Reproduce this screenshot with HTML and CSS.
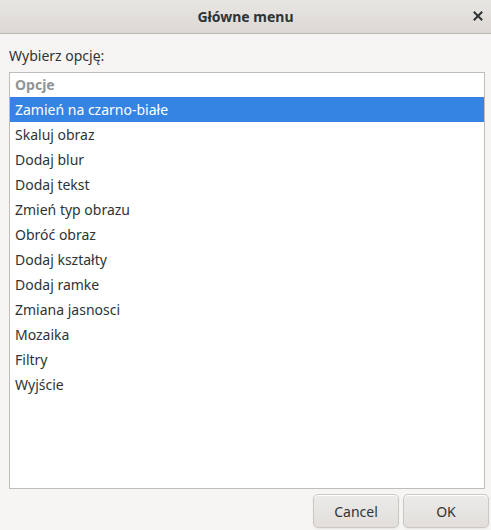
FILE: index.html
```html
<!DOCTYPE html>
<html lang="pl">
<head>
<meta charset="utf-8">
<link rel="stylesheet" href="styles.css">
</head>
<body>
<div class="window">
  <header class="titlebar">
    <span class="title">Główne menu</span>
    <span class="close">
      <svg width="10" height="10" viewBox="0 0 10 10"><path d="M1.5 1.5 L8.5 8.5 M8.5 1.5 L1.5 8.5" stroke="#2e3436" stroke-width="2" stroke-linecap="square"/></svg>
    </span>
  </header>
  <main class="content">
    <div class="label">Wybierz opcję:</div>
    <div class="list">
      <div class="list-header">Opcje</div>
      <div class="row selected">Zamień na czarno-białe</div>
      <div class="row">Skaluj obraz</div>
      <div class="row">Dodaj blur</div>
      <div class="row">Dodaj tekst</div>
      <div class="row">Zmień typ obrazu</div>
      <div class="row">Obróć obraz</div>
      <div class="row">Dodaj kształty</div>
      <div class="row">Dodaj ramke</div>
      <div class="row">Zmiana jasnosci</div>
      <div class="row">Mozaika</div>
      <div class="row">Filtry</div>
      <div class="row">Wyjście</div>
    </div>
    <div class="buttons">
      <button class="btn">Cancel</button>
      <button class="btn">OK</button>
    </div>
  </main>
</div>
</body>
</html>
```
FILE: styles.css
```css
* { box-sizing: border-box; }
html, body { margin: 0; padding: 0; }
body {
  width: 491px;
  height: 530px;
  overflow: hidden;
  background: #f6f5f4;
  font-family: "Noto Sans", "DejaVu Sans", sans-serif;
  font-size: 14px;
  color: #2e3436;
}
.window { display: flex; flex-direction: column; height: 530px; }
.titlebar {
  height: 34px;
  flex: none;
  background: linear-gradient(#e8e6e3, #dcd8d4);
  border-bottom: 1px solid #bfb8b1;
  display: flex;
  align-items: center;
  justify-content: center;
  position: relative;
}
.title { font-weight: bold; font-size: 14px; color: #2e3436; }
.close {
  position: absolute;
  right: 8px;
  top: 11px;
  width: 10px;
  height: 10px;
  display: flex;
}
.content {
  flex: 1;
  display: flex;
  flex-direction: column;
  padding: 12px 6px 2px 9px;
}
.label { height: 26px; line-height: 20px; padding-top: 0; }
.list {
  flex: none;
  height: 417px;
  background: #fff;
  border: 1px solid #c0bdb8;
  display: flex;
  flex-direction: column;
}
.list-header {
  height: 24px;
  line-height: 24px;
  padding-left: 5px;
  font-weight: bold;
  color: #929595;
}
.row {
  height: 25px;
  line-height: 25px;
  padding-left: 5px;
}
.row.selected { background: #3584e4; color: #fff; }
.buttons {
  display: flex;
  justify-content: flex-end;
  gap: 4px;
  margin-top: 5px;
  margin-right: -4px;
}
.btn {
  width: 86px;
  height: 34px;
  font-family: inherit;
  font-size: 14px;
  color: #2e3436;
  background: linear-gradient(#edebe9, #e1dedb);
  border: 1px solid #cdc7c2;
  border-radius: 5px;
  box-shadow: inset 0 1px #fff, 0 1px 2px rgba(0,0,0,0.07);
}
```
